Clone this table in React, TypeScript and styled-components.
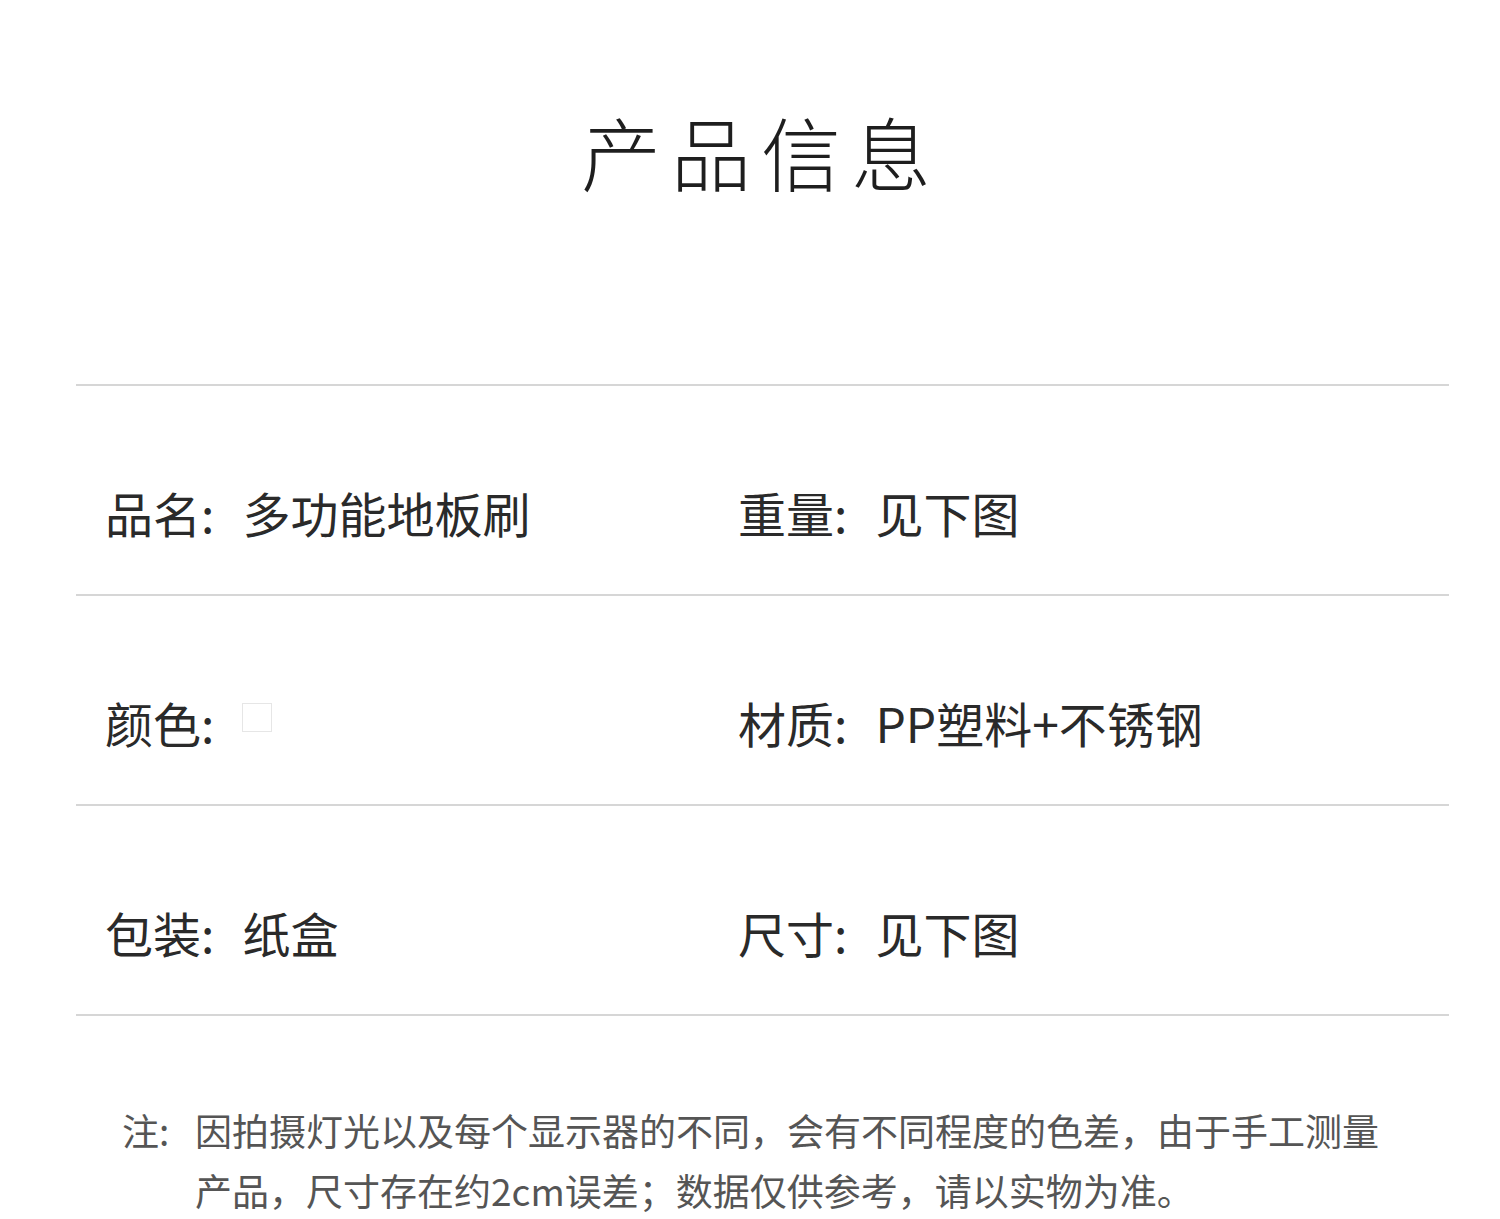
import React from "react";
import styled, {createGlobalStyle} from "styled-components";

type SpecItem = {
    label: string
    value?: string
    swatch?: boolean
}

const rows: SpecItem[][] = [
    [{label: "品名", value: "多功能地板刷"}, {label: "重量", value: "见下图"}],
    [{label: "颜色", swatch: true}, {label: "材质", value: "PP塑料+不锈钢"}],
    [{label: "包装", value: "纸盒"}, {label: "尺寸", value: "见下图"}],
]

const GlobalStyle = createGlobalStyle`
  html, body {
    margin: 0;
    padding: 0;
    background: #fff;
  }

  body {
    font-family: "Noto Sans CJK SC", "Noto Sans", sans-serif;
    color: #222;
  }
`

export default function App() {
    return (
        <>
            <GlobalStyle/>
            <Page>
                <Title>产品信息</Title>
                <SpecTable>
                    {rows.map((row, i) => (
                        <SpecRow key={i}>
                            {row.map(item => (
                                <SpecCell key={item.label}>
                                    <Label>{item.label}:</Label>
                                    {item.swatch ? <Swatch/> : <Value>{item.value}</Value>}
                                </SpecCell>
                            ))}
                        </SpecRow>
                    ))}
                </SpecTable>
                <Note>
                    <NoteMark>注:</NoteMark>
                    <NoteText>
                        <NoteLine>因拍摄灯光以及每个显示器的不同，会有不同程度的色差，由于手工测量</NoteLine>
                        <NoteLine>产品，尺寸存在约2cm误差；数据仅供参考，请以实物为准。</NoteLine>
                    </NoteText>
                </Note>
            </Page>
        </>
    )
}

const Page = styled.div`
  width: 1500px;
  height: 1219px;
  overflow: hidden;
  display: flex;
  flex-direction: column;
`

const Title = styled.h1`
  margin: 0;
  padding-top: 105px;
  height: 384px;
  flex: none;
  box-sizing: border-box;
  text-align: center;
  font-size: 80px;
  line-height: 90px;
  font-weight: 300;
  letter-spacing: 10px;
  text-indent: 22px;
  color: #1e1e1e;
`

const SpecTable = styled.div`
  margin: 0 51px 0 76px;
  border-top: 2px solid #d6d6d6;
`

const SpecRow = styled.div`
  display: grid;
  grid-template-columns: 633px 1fr;
  height: 210px;
  box-sizing: border-box;
  padding-top: 44px;
  align-items: center;
  border-bottom: 2px solid #d6d6d6;
`

const SpecCell = styled.div`
  display: flex;
  align-items: center;
  padding-left: 29px;
  font-size: 48px;
  line-height: 1;
  color: #2a2a2a;
`

const Label = styled.span`
  margin-right: 28px;
`

const Value = styled.span``

const Swatch = styled.span`
  display: inline-block;
  width: 30px;
  height: 29px;
  box-sizing: border-box;
  border: 1px solid #e6e6e6;
  margin-top: -10px;
`

const Note = styled.div`
  display: flex;
  padding: 84px 0 0 122px;
  font-size: 37px;
  line-height: 60px;
  color: #555;
`

const NoteMark = styled.span`
  width: 73px;
  flex: none;
`

const NoteText = styled.div`
  display: flex;
  flex-direction: column;
`

const NoteLine = styled.span`
  white-space: nowrap;
`
